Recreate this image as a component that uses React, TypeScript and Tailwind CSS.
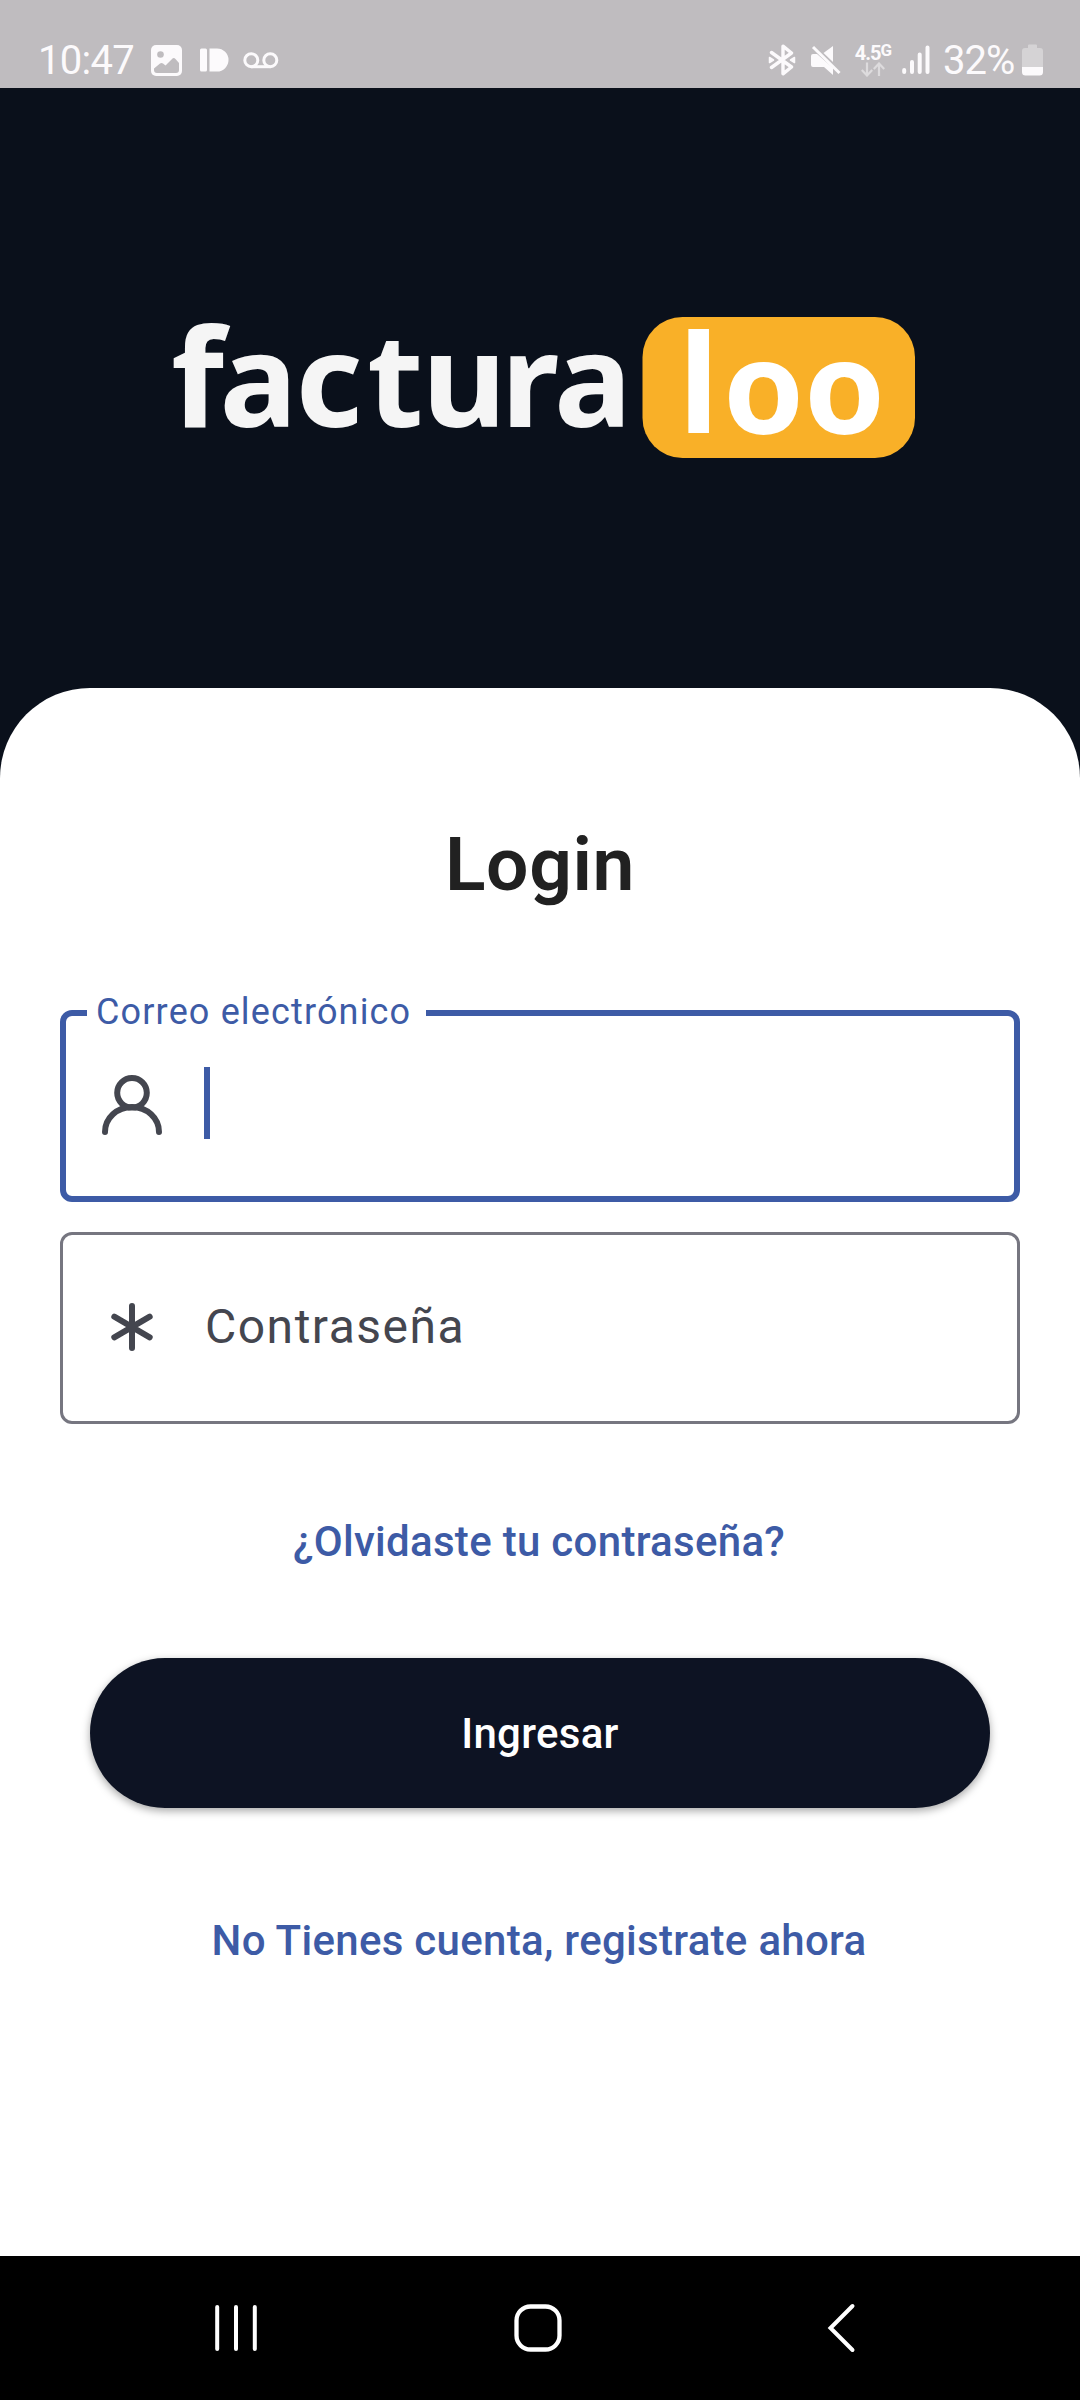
import React, { FunctionComponent } from 'react';

const StatusBar: FunctionComponent = () => (
  <div className="h-[88px] pt-8 pl-[38px] pr-[37px] flex items-center justify-between bg-[#bfbcbf] text-[#fcfafc]">
    <div className="flex items-center">
      <span className="w-[113px] pt-[2px] text-[40px] leading-[56px] tracking-[-0.7px]">10:47</span>
      <svg className="w-[31px] h-[31px]" viewBox="0 0 31 31">
        <rect width="31" height="31" rx="5" fill="#fcfafc" />
        <circle cx="9.5" cy="9.5" r="3.3" fill="#bfbcbf" />
        <path
          d="M3 23.500l6-5q1.500-1 3 0l2.500 2 7-7q1.500-1 3 0.500l3.500 4v7q0 3-3 3H6q-3 0-3-3z"
          fill="#bfbcbf"
        />
      </svg>
      <svg className="w-[29px] h-[24px] ml-[18px]" viewBox="0 0 29 24" fill="currentColor">
        <rect y="0.5" width="7" height="23" rx="1.5" />
        <path d="M9.5 0.5H17a11.5 11.5 0 0 1 0 23H9.5z" />
      </svg>
      <svg
        className="w-[36px] h-[17px] ml-[14px]"
        viewBox="0 0 36 17"
        fill="none"
        stroke="currentColor"
        strokeWidth="3"
      >
        <circle cx="8.3" cy="8.2" r="6.5" />
        <circle cx="27.3" cy="8.2" r="6.5" />
        <path d="M8.3 14.7h19" />
      </svg>
    </div>
    <div className="flex items-center">
      <svg
        className="w-[28px] h-[32px]"
        viewBox="0 0 28 32"
        fill="none"
        stroke="currentColor"
        strokeWidth="3.4"
        strokeLinejoin="round"
        strokeLinecap="round"
      >
        <path d="M3.500 8.500L23.500 23l-8.500 6.800V2.200L23.500 9l-20 14.500" />
        <path d="M1.500 13.500l4 2.500-4 2.500zM26.500 13.500l-4 2.500 4 2.500z" strokeWidth="1.5" fill="currentColor" />
      </svg>
      <svg className="w-[30px] h-[32px] ml-[15px]" viewBox="0 0 30 32" fill="currentColor">
        <path d="M22 2v16l-9.500-9z" />
        <path d="M0 12q0-2 2-2h4l16 14v7l-9-8H2q-2 0-2-2z" />
        <path d="M2 3l26.500 26" stroke="currentColor" strokeWidth="3" />
      </svg>
      <div className="w-[36px] ml-[14px] h-[36px] flex flex-col items-center">
        <span className="flex h-[20px] text-[20px] leading-[22px] font-bold tracking-[-1px]">
          4.5<span className="text-[17px] leading-[17px]">G</span>
        </span>
        <svg
          className="w-[24px] h-[15px]"
          viewBox="0 0 24 15"
          fill="none"
          stroke="#dddbdd"
          strokeWidth="2.2"
        >
          <path d="M6 0.500v13M0.800 8l5.200 5.500L11.200 8M18 14V1.500M12.800 7L18 1.500 23.200 7" />
        </svg>
      </div>
      <svg
        className="w-[28px] h-[30px] ml-[11px]"
        viewBox="0 0 28 30"
        stroke="currentColor"
        strokeWidth="4"
        strokeLinecap="round"
      >
        <path d="M2.200 25v2M10 17v10M17.700 9.500V27M25.500 2.500V27" />
      </svg>
      <span className="w-[77px] ml-[13px] pt-[2px] text-[40px] leading-[56px] tracking-[-1px]">32%</span>
      <svg className="w-[21px] h-[32px] ml-[2px]" viewBox="0 0 21 32">
        <path d="M6 1.500Q6 0.500 7 0.500h7q1 0 1 1V4h3q3 0 3 3v16H0V7q0-3 3-3h3z" fill="#d5d3d5" />
        <path d="M0 23h21v5q0 3.500-3.500 3.500h-14Q0 31.500 0 28z" fill="#fcfafc" />
      </svg>
    </div>
  </div>
);

const Logo: FunctionComponent = () => (
  <svg
    className="w-[1080px] h-[600px]"
    viewBox="0 88 1080 600"
    fontFamily="'Noto Sans', sans-serif"
    fontWeight="700"
    fontSize="130"
  >
    <text x="171" y="427" fontSize="137" fill="#f5f5f5">
      f
    </text>
    <text x="219.500 295.500 367 422 501 554" y="427" fill="#f5f5f5">
      actura
    </text>
    <rect x="642.500" y="317" width="272.500" height="141" rx="40" fill="#f9b028" />
    <text x="678.500" y="433" fontSize="136" fill="#ffffff">
      l
    </text>
    <text x="723 804" y="433.500" fill="#ffffff">
      oo
    </text>
  </svg>
);

const LoginForm: FunctionComponent = () => (
  <div className="flex-1 flex flex-col items-center pt-[134px] bg-white rounded-t-[90px]">
    <h1 className="text-[75px] leading-[84px] font-semibold tracking-[0.600px] text-[#212121]">Login</h1>
    <div className="w-[960px] mt-[104px] flex flex-col gap-[30px]">
      <div className="relative h-[192px] pl-[36px] flex items-center border-6 border-[#3d5ba6] rounded-[12px]">
        <span className="absolute left-[21px] -top-[25px] w-[339px] pl-[9px] bg-white text-[36px] leading-[42px] tracking-[1.150px] whitespace-nowrap text-[#3d5ba6]">
          Correo electrónico
        </span>
        <svg
          className="w-[60px] h-[60px] -mt-[3px]"
          viewBox="0 0 60 60"
          fill="none"
          stroke="#44464f"
          strokeWidth="6"
          strokeLinecap="round"
        >
          <circle cx="30" cy="17.800" r="14.800" />
          <path d="M3 57a27 25 0 0 1 54 0" />
        </svg>
        <span className="w-[6px] h-[72px] ml-[42px] -mt-[6px] bg-[#3d5ba6]"></span>
      </div>
      <div className="h-[192px] pl-[45px] flex items-center border-3 border-[#767680] rounded-[12px]">
        <svg
          className="w-[48px] h-[48px] -mt-[2px]"
          viewBox="0 0 48 48"
          fill="none"
          stroke="#44464f"
          strokeWidth="6"
          strokeLinecap="round"
        >
          <path d="M24 3v42M6.300 13.700l35.400 20.600M6.300 34.300l35.400-20.600" />
        </svg>
        <span className="ml-[49px] -mt-[2px] text-[48px] leading-[56px] tracking-[1.500px] text-[#44464f]">
          Contraseña
        </span>
      </div>
    </div>
    <button className="mt-[88px] mr-[2px] text-[42px] leading-[60px] font-medium tracking-[0.300px] text-[#3d5ba6]">
      ¿Olvidaste tu contraseña?
    </button>
    <button className="w-[900px] h-[150px] mt-[86px] pt-[2px] rounded-full bg-[#0d1323] text-[42px] leading-[60px] font-medium tracking-[0.300px] text-white shadow-[0_3px_8px_rgba(0,0,0,0.35)]">
      Ingresar
    </button>
    <button className="mt-[103px] mr-[2px] text-[42px] leading-[60px] font-medium tracking-[0.300px] text-[#3d5ba6]">
      No Tienes cuenta, registrate ahora
    </button>
  </div>
);

const NavigationBar: FunctionComponent = () => (
  <div className="h-[144px] pl-[215px] flex items-center bg-black">
    <svg
      className="w-[42px] h-[48px]"
      viewBox="0 0 42 48"
      stroke="white"
      strokeWidth="4"
      strokeLinecap="round"
    >
      <path d="M2.200 3v42M21 3v42M39.800 3v42" />
    </svg>
    <svg
      className="w-[48px] h-[48px] ml-[257px]"
      viewBox="0 0 48 48"
      fill="none"
      stroke="white"
      strokeWidth="4.300"
    >
      <rect x="2.500" y="2.500" width="43" height="43" rx="14" />
    </svg>
    <svg
      className="w-[29px] h-[50px] ml-[265px]"
      viewBox="0 0 29 50"
      fill="none"
      stroke="white"
      strokeWidth="4"
      strokeLinecap="round"
    >
      <path d="M25.500 3L3.500 25l22 22" />
    </svg>
  </div>
);

const App: FunctionComponent = () => {
  return (
    <div className="w-[1080px] h-[2400px] flex flex-col font-['Roboto',sans-serif] bg-[#0a101b]">
      <StatusBar />
      <Logo />
      <LoginForm />
      <NavigationBar />
    </div>
  );
};

export default App;
